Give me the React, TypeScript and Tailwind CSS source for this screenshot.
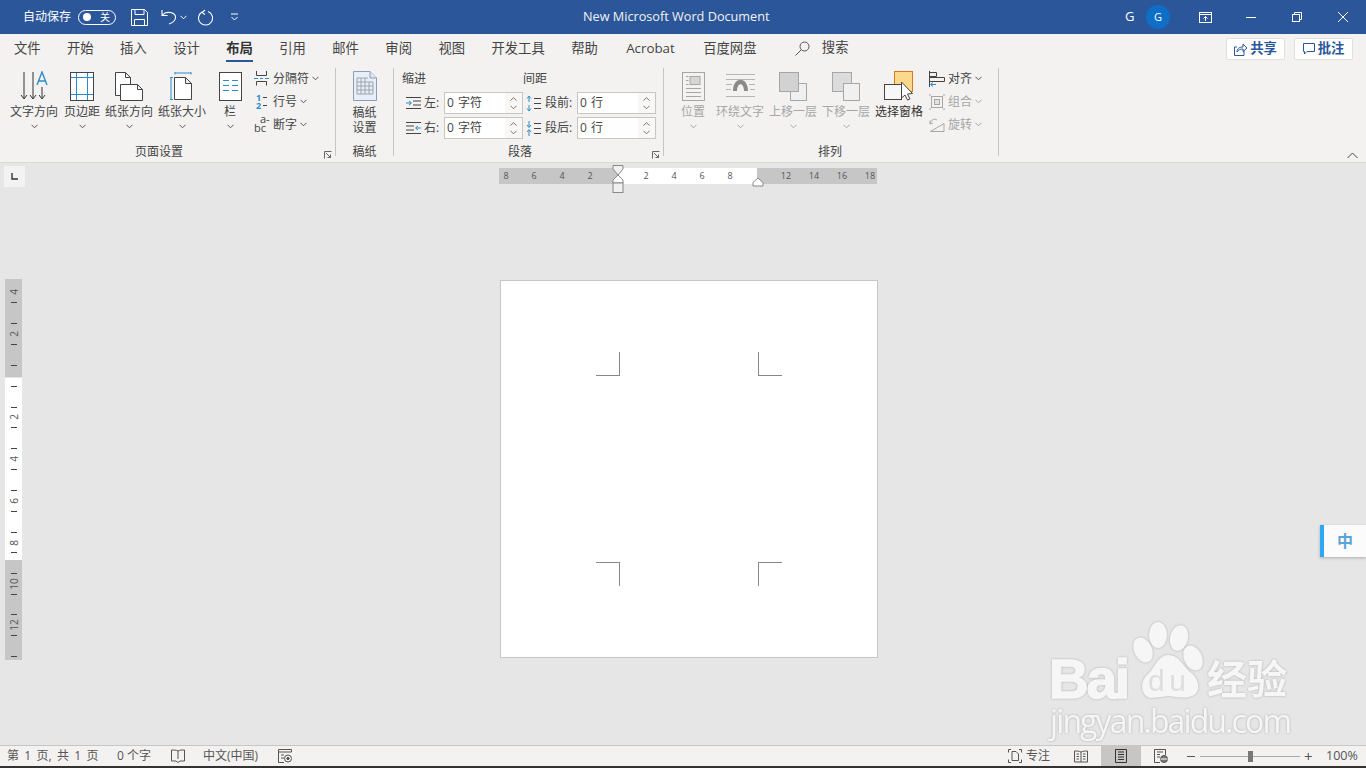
import type { ReactNode } from 'react';

const BLUE = '#2b8ccc';

function Chevron({ color = '#555' }: { color?: string }) {
    return (
        <svg width="7" height="5" viewBox="0 0 7 5" fill="none" stroke={color} strokeWidth="1">
            <path d="M0.5 0.8 L3.5 3.8 L6.5 0.8" />
        </svg>
    );
}

function BigButton({ w, ml = 0, label, icon, off }: { w: number; ml?: number; label: ReactNode; icon: ReactNode; off?: boolean }) {
    return (
        <div className={`flex flex-col items-center shrink-0 ${off ? 'text-[#a6a6a6]' : 'text-[#444]'}`} style={{ width: w, marginLeft: ml }}>
            <div className="h-[32px] flex items-center justify-center">{icon}</div>
            <div className="h-[20px] leading-[20px] whitespace-nowrap">{label}</div>
            <div className="h-[9px] flex items-center"><Chevron color={off ? '#a6a6a6' : '#555'} /></div>
        </div>
    );
}

function SmallRow({ icon, label, off }: { icon: ReactNode; label: string; off?: boolean }) {
    return (
        <div className={`h-[23px] flex items-center whitespace-nowrap ${off ? 'text-[#a6a6a6]' : 'text-[#444]'}`}>
            <div className="w-[19px] flex justify-start">{icon}</div>
            <span>{label}</span>
            <span className="ml-[3px]"><Chevron color={off ? '#a6a6a6' : '#555'} /></span>
        </div>
    );
}

function Launcher() {
    return (
        <svg className="absolute right-[3px] bottom-[3px]" width="8" height="8" viewBox="0 0 8 8" fill="none" stroke="#666" strokeWidth="1">
            <path d="M0.5 7.5 V0.5 H7.5" />
            <path d="M2 2 L6.5 6.5 M6.5 3.5 V6.5 H3.5" />
        </svg>
    );
}

function Spin({ value }: { value: string }) {
    return (
        <div className="h-[22px] w-[79px] bg-white border border-[#c8c6c4] flex items-stretch text-[#444]">
            <div className="flex-1 pl-[2px] leading-[20px] [word-spacing:1px]">{value}</div>
            <div className="w-[17px] bg-[#f8f7f6] flex flex-col items-center justify-center gap-[4px]">
                <svg width="7" height="4" viewBox="0 0 7 4" fill="none" stroke="#777"><path d="M0.5 3.5 L3.5 0.7 L6.5 3.5" /></svg>
                <Chevron color="#777" />
            </div>
        </div>
    );
}

const Sep = () => <div className="w-px my-[6px] bg-[#c8c6c4] shrink-0" />;

// -- ribbon icons --
const TextDir = (
    <svg width="30" height="30" viewBox="0 0 30 30" fill="none" stroke="#333">
        <path d="M5 1 V27 M2 24 L5 28 L8 24 M14 1 V27 M11 24 L14 28 L17 24 M23 16 V27 M20 24 L23 28 L26 24" />
        <path d="M18 14 L23 1 L28 14 M19.5 10 H26.5" stroke={BLUE} strokeWidth="1.4" />
    </svg>
);
const Margins = (
    <svg width="24" height="29" viewBox="0 0 24 29" fill="none">
        <rect x="0.5" y="0.5" width="23" height="28" fill="#fff" stroke="#444" />
        <path d="M6.5 1 V28 M17.5 1 V28 M1 5.5 H23 M1 22.5 H23" stroke={BLUE} />
    </svg>
);
const Orient = (
    <svg width="30" height="29" viewBox="0 0 30 29" fill="none" stroke="#444">
        <path d="M1.5 0.5 H11.5 L16.5 5.5 V23.5 H1.5 Z M11.5 0.5 V5.5 H16.5" fill="#fff" />
        <path d="M6.5 12.5 H23.5 L28.5 17.5 V28.5 H6.5 Z M23.5 12.5 V17.5 H28.5" fill="#fff" />
    </svg>
);
const PaperSize = (
    <svg className="-ml-[3px]" width="22" height="29" viewBox="0 0 22 29" fill="none">
        <path d="M4.5 5.5 H15.5 L21.5 11.5 V27.5 H4.5 Z M15.5 5.5 V11.5 H21.5" fill="#fff" stroke="#444" />
        <path d="M5 1 H21 M5 0 V2.5 M21 0 V2.5 M1 6 V27.5 M0 5.5 H3 M0 27.5 H3" stroke={BLUE} />
    </svg>
);
const Columns = (
    <svg width="23" height="29" viewBox="0 0 23 29" fill="none">
        <rect x="0.5" y="0.5" width="22" height="28" fill="#fff" stroke="#444" />
        <path d="M4 8.5 H10 M13 8.5 H19 M4 13.5 H10 M13 13.5 H19 M4 18.5 H10 M13 18.5 H19" stroke={BLUE} />
    </svg>
);
const Breaks = (
    <svg width="15" height="15" viewBox="0 0 15 15" fill="none" stroke="#444">
        <path d="M2.5 0 V4.5 H12.5 V0 M2.5 14.5 V10.5 H12.5 V14.5" />
        <path d="M0 7.5 H4 M6 7.5 H9 M11 7.5 H15" stroke={BLUE} />
    </svg>
);
const LineNo = (
    <svg className="overflow-visible" width="15" height="16" viewBox="0 0 15 16" fontFamily="'Open Sans', sans-serif" fontSize="9" fontWeight="700" fill={BLUE}>
        <text x="2" y="7">1</text>
        <text x="2" y="15">2</text>
        <path d="M9 3.5 H13 M9 11.5 H13" stroke="#444" />
    </svg>
);
const Hyphen = (
    <svg className="overflow-visible" width="17" height="17" viewBox="0 0 17 17" fontFamily="'Open Sans', sans-serif" fontSize="11" fill="#444">
        <text x="6" y="7">a-</text>
        <text x="0" y="16">bc</text>
    </svg>
);
const Draft = (
    <svg className="ml-[1px]" width="24" height="30" viewBox="0 0 24 30" fill="none">
        <path d="M0.5 0.5 H17 L23.5 7 V29.5 H0.5 Z" fill="#e8eef7" stroke="#8d9db5" />
        <path d="M17 0.5 V7 H23.5" fill="#dfe6f0" stroke="#8d9db5" />
        <path d="M4 7 H15 M4 11 H20 M4 15 H20 M4 19 H20 M4 23 H20 M4 7 V23 M8 7 V23 M12 7 V23 M16 11 V23 M20 11 V23" stroke="#9aa3ad" />
    </svg>
);
const IndentL = (
    <svg width="15" height="12" viewBox="0 0 15 12" fill="none">
        <path d="M0 0.5 H15 M7 4 H15 M7 8 H15 M0 11.5 H15" stroke="#444" />
        <path d="M0 6 H5 M3 4 L5.5 6 L3 8" stroke={BLUE} />
    </svg>
);
const IndentR = (
    <svg width="15" height="12" viewBox="0 0 15 12" fill="none">
        <path d="M0 0.5 H15 M0 4 H8 M0 8 H8 M0 11.5 H15" stroke="#444" />
        <path d="M15 6 H10 M12 4 L9.5 6 L12 8" stroke={BLUE} />
    </svg>
);
function SpaceIcon({ flip }: { flip?: boolean }) {
    return (
        <svg width="15" height="15" viewBox="0 0 15 15" fill="none">
            <path d="M8 2.5 H15 M8 7.5 H15 M8 12.5 H15" stroke="#444" />
            <path d={flip ? 'M3 0 V6 M1 4 L3 6.5 L5 4 M3 15 V9 M1 11 L3 8.5 L5 11' : 'M3 6 V0.5 M1 2.5 L3 0 L5 2.5 M3 9 V14.5 M1 12.5 L3 15 L5 12.5'} stroke={BLUE} />
        </svg>
    );
}
const Position = (
    <svg width="23" height="29" viewBox="0 0 23 29" fill="none" stroke="#a6a6a6">
        <rect x="0.5" y="0.5" width="22" height="28" fill="#f3f2f1" />
        <rect x="8" y="4.5" width="10" height="8" fill="#d6d6d6" />
        <path d="M4 4.5 H6.5 M4 8.5 H6.5 M4 12.5 H6.5 M4 16.5 H19 M4 20.5 H19 M4 24.5 H19" />
    </svg>
);
const Wrap = (
    <svg width="29" height="24" viewBox="0 0 29 24" fill="none" stroke="#b5b5b5">
        <path d="M0 0.5 H29 M0 5.5 H29 M0 10.5 H6 M23 10.5 H29 M0 15.5 H5 M24 15.5 H29 M0 22.5 H29" />
        <path d="M7 17 C7 2 22 2 22 17 H18 C18 8 11 8 11 17 Z" fill="#8a8a8a" stroke="none" />
    </svg>
);
function Layers({ front }: { front?: boolean }) {
    return (
        <svg width="28" height="29" viewBox="0 0 28 29" fill="none">
            {front ? (
                <>
                    <rect x="11.5" y="11.5" width="16" height="17" fill="#f0f0f0" stroke="#a6a6a6" />
                    <rect x="0.5" y="0.5" width="19" height="19" fill="#d2d2d2" stroke="#a6a6a6" />
                </>
            ) : (
                <>
                    <rect x="0.5" y="0.5" width="19" height="19" fill="#dcdcdc" stroke="#a6a6a6" />
                    <rect x="11.5" y="11.5" width="16" height="17" fill="#f0f0f0" stroke="#a6a6a6" />
                </>
            )}
        </svg>
    );
}
const Pane = (
    <svg width="30" height="30" viewBox="0 0 30 30" fill="none">
        <rect x="10.5" y="0.5" width="18" height="20" fill="#fbd88c" stroke="#d9771e" />
        <rect x="0.5" y="13.5" width="17" height="15" fill="#f7f7f7" stroke="#444" />
        <path d="M17.5 11 V27 L21 24 L23.5 29 L26 28 L23.5 23 L28.5 22.5 Z" fill="#fff" stroke="#444" />
    </svg>
);
const Align = (
    <svg width="16" height="16" viewBox="0 0 16 16" fill="none">
        <path d="M0.5 0 V16" stroke="#444" />
        <path d="M1 1.5 H7.5 V5.5 H1 M1 6.5 H15.5 V10.5 H1" stroke="#444" />
        <path d="M7 13.5 H2 M4 11.5 L1.5 13.5 L4 15.5" stroke={BLUE} />
    </svg>
);
const Group = (
    <svg width="16" height="16" viewBox="0 0 16 16" fill="none" stroke="#a6a6a6">
        <rect x="2.5" y="2.5" width="11" height="11" />
        <rect x="5.5" y="5.5" width="5" height="5" fill="#e4e4e4" />
        <path d="M0 1 H2 M0 15 H2 M14 1 H16 M14 15 H16" />
    </svg>
);
const Rotate = (
    <svg width="16" height="16" viewBox="0 0 16 16" fill="none" stroke="#a6a6a6">
        <path d="M1.5 14.5 L15 6.5 V14.5 Z" />
        <path d="M1 7 C2 3 5 1 8 3 M1 3.5 L1 7 L4 6" />
    </svg>
);

function Tab({ children, active, ml = 0 }: { children: ReactNode; active?: boolean; ml?: number }) {
    return (
        <div className={`relative h-[28px] leading-[28px] whitespace-nowrap ${active ? 'font-bold text-[#333]' : 'text-[#444]'}`} style={{ marginLeft: ml }}>
            {children}
            {active && <div className="absolute left-0 right-0 bottom-0 h-[2px] bg-[#2b579a]" />}
        </div>
    );
}

function RulerNums({ items, pl }: { items: string[]; pl: number }) {
    return (
        <div className="flex" style={{ marginLeft: pl }}>
            {items.map((n, i) => (
                <span key={i} className="w-[28px] shrink-0 text-center">{n}</span>
            ))}
        </div>
    );
}

function VMark({ v }: { v: string }) {
    return (
        <div className="h-[10.43px] flex items-center justify-center shrink-0">
            {v === 't' && <div className="w-[6px] h-px bg-[#444]" />}
            {v !== 't' && v !== '' && <span className="-rotate-90 text-[10px] leading-[10px] text-[#555]">{v}</span>}
        </div>
    );
}

const V_TOP = ['4', 't', '', 't', '2', 't', '', 't'];
const V_MID = ['t', '', 't', '2', 't', '', 't', '4', 't', '', 't', '6', 't', '', 't', '8', 't'];
const V_BOT = ['t', '10', 't', '', 't', '12', 't', '', 't'];

function Mark({ className }: { className: string }) {
    return <div className={`w-[24px] h-[24px] border-[#888] ${className}`} />;
}

export default function App() {
    return (
        <div className="w-[1366px] h-[768px] overflow-hidden flex flex-col bg-[#e6e6e6] text-[12px] font-['Open_Sans','Noto_Sans_CJK_SC',sans-serif]">
            {/* title bar */}
            <div className="h-[34px] shrink-0 bg-[#2b579a] text-white flex items-center">
                <span className="ml-[23px] w-[48px] whitespace-nowrap">自动保存</span>
                <div className="ml-[7px] w-[38px] h-[15px] rounded-full border border-white flex items-center justify-between pl-[4px] pr-[5px]">
                    <div className="w-[8px] h-[8px] rounded-full bg-white" />
                    <span className="text-[10px] leading-none">关</span>
                </div>
                <svg className="ml-[15px]" width="17" height="17" viewBox="0 0 17 17" fill="none" stroke="#fff">
                    <path d="M0.5 0.5 H13.5 L16.5 3.5 V16.5 H0.5 Z M4 0.5 V5.5 H13 V0.5 M3.5 16.5 V10.5 H13.5 V16.5" />
                </svg>
                <svg className="ml-[13px]" width="16" height="16" viewBox="0 0 16 16" fill="none" stroke="#fff" strokeWidth="1.1">
                    <path d="M1 1 V6.5 H6.5 M1.5 6 C5 1.5 15 3 14.5 9 C14 12 11 14 8 15" />
                </svg>
                <span className="ml-[3px]"><Chevron color="#fff" /></span>
                <svg className="ml-[9px]" width="17" height="17" viewBox="0 0 17 17" fill="none" stroke="#fff" strokeWidth="1.1">
                    <path d="M9 1 L6 3.5 L9 5.5 M6 3 A7 7 0 1 0 12 2.5" />
                </svg>
                <svg className="ml-[17px]" width="9" height="8" viewBox="0 0 9 8" fill="none" stroke="#fff">
                    <path d="M1 1 H8 M1.5 4 L4.5 7 L7.5 4" />
                </svg>
                <span className="ml-[344px] w-[186px] text-center whitespace-nowrap text-[12.7px] text-[#f2f2f2]">New Microsoft Word Document</span>
                <span className="ml-[356px] w-[10px] text-[13px]">G</span>
                <div className="ml-[11px] w-[24px] h-[24px] rounded-full bg-[#0f6fc6] flex items-center justify-center text-[11px]">G</div>
                <svg className="ml-[29px]" width="13" height="11" viewBox="0 0 13 11" fill="none" stroke="#fff">
                    <rect x="0.5" y="0.5" width="12" height="10" />
                    <path d="M1 2.5 H12 M6.5 9 V4.5 M4.5 6.5 L6.5 4.5 L8.5 6.5" />
                </svg>
                <div className="ml-[34px] w-[10px] h-px bg-white" />
                <svg className="ml-[36px]" width="10" height="10" viewBox="0 0 10 10" fill="none" stroke="#fff">
                    <rect x="0.5" y="2.5" width="7" height="7" />
                    <path d="M2.5 2 V0.5 H9.5 V7.5 H8" />
                </svg>
                <svg className="ml-[36px]" width="10" height="10" viewBox="0 0 10 10" fill="none" stroke="#fff">
                    <path d="M0 0 L10 10 M10 0 L0 10" />
                </svg>
            </div>

            {/* tabs */}
            <div className="h-[28px] shrink-0 bg-[#f3f2f1] flex text-[13.33px] pl-[14px] gap-[26.4px]">
                <Tab>文件</Tab>
                <Tab>开始</Tab>
                <Tab>插入</Tab>
                <Tab>设计</Tab>
                <Tab active>布局</Tab>
                <Tab>引用</Tab>
                <Tab>邮件</Tab>
                <Tab>审阅</Tab>
                <Tab>视图</Tab>
                <Tab>开发工具</Tab>
                <Tab>帮助</Tab>
                <Tab ml={2}>Acrobat</Tab>
                <Tab ml={2}>百度网盘</Tab>
                <div className="flex items-center ml-[12px] text-[#444]">
                    <svg width="15" height="15" viewBox="0 0 15 15" fill="none" stroke="#555">
                        <circle cx="9.5" cy="5.5" r="4.5" />
                        <path d="M6 9 L0.5 14.5" />
                    </svg>
                    <span className="ml-[12px]">搜索</span>
                </div>
                <div className="ml-auto mr-[13px] mt-[4px] flex gap-[9px] font-bold text-[#2b579a]">
                    <div className="w-[59px] h-[22px] bg-white border border-[#e1dfdd] rounded-[2px] flex items-center justify-center gap-[3px]">
                        <svg width="13" height="13" viewBox="0 0 13 13" fill="none" stroke="#2b579a">
                            <path d="M10 7 V12.5 H0.5 V4 H3 M3 9 C3 5 6 4 9 4 V1 L13 5 L9 8.5 V6 C6 6 4 7 3 9 Z" />
                        </svg>
                        共享
                    </div>
                    <div className="w-[59px] h-[22px] bg-white border border-[#e1dfdd] rounded-[2px] flex items-center justify-center gap-[3px]">
                        <svg width="12" height="12" viewBox="0 0 12 12" fill="none" stroke="#2b579a">
                            <path d="M0.5 0.5 H11.5 V8.5 H4 L1.5 11 V8.5 H0.5 Z" />
                        </svg>
                        批注
                    </div>
                </div>
            </div>

            {/* ribbon */}
            <div className="relative h-[101px] shrink-0 bg-[#f3f2f1] border-b border-[#dbd9d6] flex">
                {/* 页面设置 */}
                <div className="relative w-[335px] shrink-0 flex flex-col">
                    <div className="h-[80px] pt-[8px] flex">
                        <BigButton ml={10} w={48} label="文字方向" icon={TextDir} />
                        <BigButton ml={2} w={44} label="页边距" icon={Margins} />
                        <BigButton ml={1} w={48} label="纸张方向" icon={Orient} />
                        <BigButton ml={5} w={48} label="纸张大小" icon={PaperSize} />
                        <BigButton ml={4} w={40} label="栏" icon={Columns} />
                        <div className="ml-[4px] -mt-[3px] flex flex-col">
                            <SmallRow icon={Breaks} label="分隔符" />
                            <SmallRow icon={LineNo} label="行号" />
                            <SmallRow icon={Hyphen} label="断字" />
                        </div>
                    </div>
                    <div className="h-[18px] mt-[1px] leading-[18px] pl-[135px] text-[#444]">页面设置</div>
                    <Launcher />
                </div>
                <Sep />
                {/* 稿纸 */}
                <div className="w-[57px] shrink-0 flex flex-col items-center text-[#444]">
                    <div className="h-[80px] pt-[8px] flex flex-col items-center">
                        <div className="h-[32px] flex items-center">{Draft}</div>
                        <div className="leading-[15px] mt-[3px] text-center">稿纸<br />设置</div>
                    </div>
                    <div className="h-[18px] mt-[1px] leading-[18px]">稿纸</div>
                </div>
                <Sep />
                {/* 段落 */}
                <div className="relative w-[269px] shrink-0 flex flex-col text-[#444]">
                    <div className="h-[80px] pt-[8px] pl-[8px]">
                        <div className="flex h-[18px] leading-[18px] mb-[4px]">
                            <span className="w-[121px]">缩进</span>
                            <span>间距</span>
                        </div>
                        <div className="flex items-center h-[22px] mb-[3px]">
                            <div className="w-[22px] pl-[4px]">{IndentL}</div>
                            <span className="w-[20px]">左:</span>
                            <Spin value="0 字符" />
                            <div className="w-[22px] pl-[3px]"><SpaceIcon /></div>
                            <span className="w-[32px]">段前:</span>
                            <Spin value="0 行" />
                        </div>
                        <div className="flex items-center h-[22px]">
                            <div className="w-[22px] pl-[4px]">{IndentR}</div>
                            <span className="w-[20px]">右:</span>
                            <Spin value="0 字符" />
                            <div className="w-[22px] pl-[3px]"><SpaceIcon flip /></div>
                            <span className="w-[32px]">段后:</span>
                            <Spin value="0 行" />
                        </div>
                    </div>
                    <div className="h-[18px] mt-[1px] leading-[18px] pl-[114px]">段落</div>
                    <Launcher />
                </div>
                <Sep />
                {/* 排列 */}
                <div className="w-[334px] shrink-0 flex flex-col">
                    <div className="h-[80px] pt-[8px] flex">
                        <BigButton off ml={10} w={38} label="位置" icon={Position} />
                        <BigButton off ml={4} w={48} label="环绕文字" icon={Wrap} />
                        <BigButton off ml={5} w={48} label="上移一层" icon={<Layers front />} />
                        <BigButton off ml={5} w={48} label="下移一层" icon={<Layers />} />
                        <div className="ml-[5px] w-[48px] flex flex-col items-center text-[#333]">
                            <div className="h-[32px] flex items-center">{Pane}</div>
                            <div className="h-[20px] leading-[20px] whitespace-nowrap">选择窗格</div>
                        </div>
                        <div className="ml-[6px] -mt-[3px] flex flex-col">
                            <SmallRow icon={Align} label="对齐" />
                            <SmallRow off icon={Group} label="组合" />
                            <SmallRow off icon={Rotate} label="旋转" />
                        </div>
                    </div>
                    <div className="h-[18px] mt-[1px] leading-[18px] pl-[154px] text-[#444]">排列</div>
                </div>
                <Sep />
                <svg className="absolute left-[1347px] top-[90px]" width="11" height="7" viewBox="0 0 11 7" fill="none" stroke="#444">
                    <path d="M0.5 6 L5.5 1 L10.5 6" />
                </svg>
            </div>

            {/* document area */}
            <div className="relative flex-1 min-h-0 flex flex-col">
                <div className="h-[116px] shrink-0 flex items-start">
                    <div className="ml-[4px] mt-[3px] w-[21px] h-[21px] bg-[#f3f3f3] flex items-center justify-center">
                        <svg width="7" height="7" viewBox="0 0 7 7" fill="none" stroke="#333" strokeWidth="1.4">
                            <path d="M1 0 V6 H7" />
                        </svg>
                    </div>
                    {/* horizontal ruler */}
                    <div className="relative ml-[474px] mt-[5px] w-[378px] h-[16px] flex text-[9px] leading-[16px] text-[#555]">
                        <div className="w-[119px] bg-[#c6c6c6] overflow-hidden"><RulerNums items={['8', '6', '4', '2']} pl={-7} /></div>
                        <div className="w-[139px] bg-white"><RulerNums items={['2', '4', '6', '8']} pl={14} /></div>
                        <div className="w-[120px] bg-[#c6c6c6] overflow-hidden"><RulerNums items={['12', '14', '16', '18']} pl={15} /></div>
                        <svg className="absolute left-[113px] -top-[3px]" width="12" height="28" viewBox="0 0 12 28" fill="#fff" stroke="#888">
                            <path d="M1 0.5 H11 V4 L6 10 L1 4 Z" fill="#f0f0f0" />
                            <path d="M6 10 L11 15 V18 H1 V15 Z" />
                            <rect x="1" y="18" width="10" height="9.5" fill="#f0f0f0" />
                        </svg>
                        <svg className="absolute left-[253px] top-[9px]" width="12" height="10" viewBox="0 0 12 10" fill="#fff" stroke="#888">
                            <path d="M6 1 L11 5.5 V9 H1 V5.5 Z" />
                        </svg>
                    </div>
                </div>
                <div className="flex items-start">
                    {/* vertical ruler */}
                    <div className="ml-[5px] w-[17px] h-[381px] shrink-0 flex flex-col">
                        <div className="h-[98px] bg-[#c6c6c6] pt-[8px] overflow-hidden flex flex-col">
                            {V_TOP.map((v, i) => <VMark key={i} v={v} />)}
                        </div>
                        <div className="h-[182px] mt-px bg-white pt-[3px] overflow-hidden flex flex-col">
                            {V_MID.map((v, i) => <VMark key={i} v={v} />)}
                        </div>
                        <div className="h-[100px] bg-[#c6c6c6] pt-[8px] overflow-hidden flex flex-col">
                            {V_BOT.map((v, i) => <VMark key={i} v={v} />)}
                        </div>
                    </div>
                    {/* page */}
                    <div className="ml-[478px] mt-px w-[378px] h-[378px] bg-white border border-[#c6c6c6] px-[95px] py-[71px] flex flex-col justify-between">
                        <div className="flex justify-between">
                            <Mark className="border-r border-b" />
                            <Mark className="border-l border-b" />
                        </div>
                        <div className="flex justify-between">
                            <Mark className="border-r border-t" />
                            <Mark className="border-l border-t" />
                        </div>
                    </div>
                </div>

                {/* IME badge */}
                <div className="absolute right-0 top-[362px] w-[46px] h-[32px] bg-[#fbfbfb] border-l-[4px] border-[#2ea7f7] shadow-[0_1px_3px_rgba(0,0,0,0.25)] flex items-center justify-center text-[16px] font-bold text-[#5ba4d6]">中</div>

                {/* watermark */}
                <svg className="absolute left-[1040px] top-[457px]" width="260" height="125" viewBox="0 0 260 125" style={{ filter: 'drop-shadow(0 0 1px rgba(150,150,150,0.7))' }}>
                    <g fill="#f6f6f6">
                        <ellipse cx="118" cy="15" rx="9" ry="13" />
                        <ellipse cx="139" cy="18" rx="9" ry="13" transform="rotate(12 139 18)" />
                        <ellipse cx="103" cy="30" rx="9" ry="13" transform="rotate(-25 103 30)" />
                        <ellipse cx="153" cy="38" rx="9" ry="13" transform="rotate(-25 153 38)" />
                        <path d="M128 35 C139 35 143 46 150 52 C158 58 160 66 157 72 C153 79 141 78 128 76 C114 78 110 79 106 76 C100 70 101 60 108 54 C115 48 118 35 128 35 Z" />
                        <text x="9" y="78" stroke="#f6f6f6" strokeWidth="1.5" fontFamily="'Liberation Sans', sans-serif" fontWeight="700" fontSize="55" textLength="81">Bai</text>
                        <text x="167" y="74" fontFamily="'Noto Sans CJK SC', sans-serif" fontWeight="700" fontSize="40">经验</text>
                        <text x="10" y="113" fontFamily="'Open Sans', sans-serif" fontSize="32" textLength="242">jingyan.baidu.com</text>
                    </g>
                    <text x="108" y="71" fill="#dedede" fontFamily="'Liberation Sans', sans-serif" fontSize="30" textLength="38">du</text>
                </svg>
            </div>

            {/* status bar */}
            <div className="h-[21px] shrink-0 bg-[#f3f2f1] border-t border-[#c6c6c6] flex items-center text-[#555] whitespace-nowrap">
                <span className="ml-[7px] w-[91px] [word-spacing:2.2px]">第 1 页, 共 1 页</span>
                <span className="ml-[19px] w-[35px]">0 个字</span>
                <svg className="ml-[19px]" width="14" height="14" viewBox="0 0 14 14" fill="none" stroke="#555">
                    <path d="M7 2 C5.5 1 3 1 0.5 1 V12 H5 L7 13.5 L9 12 H13.5 V1 C11 1 8.5 1 7 2 Z M7 2 V10" />
                </svg>
                <span className="ml-[18px] w-[56px]">中文(中国)</span>
                <svg className="ml-[19px]" width="14" height="14" viewBox="0 0 14 14" fill="none" stroke="#555">
                    <path d="M0.5 0.5 H13.5 V3 H0.5 Z M0.5 3 V13.5 H6 M3 6 H6 M3 9 H6" />
                    <circle cx="10" cy="9.5" r="3.5" />
                    <circle cx="10" cy="9.5" r="1.2" fill="#555" />
                </svg>

                <svg className="ml-[716px]" width="14" height="14" viewBox="0 0 14 14" fill="none" stroke="#555">
                    <path d="M0.5 3.5 V0.5 H3 M11 0.5 H13.5 V3.5 M0.5 10.5 V13.5 H3 M11 13.5 H13.5 V10.5" />
                    <path d="M4 2.5 H8 L10.5 5 V11.5 H4 Z" />
                </svg>
                <span className="ml-[4px] w-[24px]">专注</span>
                <svg className="ml-[24px]" width="14" height="13" viewBox="0 0 14 13" fill="none" stroke="#555">
                    <path d="M7 2 C5 1 3 1 0.5 1 V12 H7 H13.5 V1 C11 1 9 1 7 2 Z M7 2 V12 M2.5 4 H5 M2.5 6.5 H5 M2.5 9 H5 M9 4 H11.5 M9 6.5 H11.5 M9 9 H11.5" />
                </svg>
                <div className="ml-[13px] w-[40px] h-[20px] bg-[#c8c6c4] flex items-center justify-center">
                    <svg width="12" height="14" viewBox="0 0 12 14" fill="none" stroke="#333">
                        <path d="M0.5 0.5 H11.5 V13.5 H0.5 Z M3 3 H9 M3 5.5 H9 M3 8 H9 M3 10.5 H9" />
                    </svg>
                </div>
                <svg className="ml-[13px]" width="14" height="14" viewBox="0 0 14 14" fill="none" stroke="#555">
                    <path d="M6 13.5 H0.5 V0.5 H11.5 V6 M3 3 H9 M3 5.5 H6 M3 8 H6" />
                    <circle cx="10" cy="10" r="3.5" fill="#777" />
                    <path d="M6.5 10 H13.5" stroke="#fff" />
                </svg>
                <div className="ml-[19px] w-[8px] h-px bg-[#555]" />
                <div className="relative ml-[5px] w-[100px] h-px bg-[#aaa]">
                    <div className="absolute left-[48px] -top-[5px] w-[5px] h-[11px] bg-[#777]" />
                </div>
                <span className="ml-[4px] text-[15px] leading-none w-[9px]">+</span>
                <span className="ml-[13px] text-[12.5px]">100%</span>
            </div>
            <div className="h-[2px] shrink-0 bg-[#333]" />
        </div>
    );
}
